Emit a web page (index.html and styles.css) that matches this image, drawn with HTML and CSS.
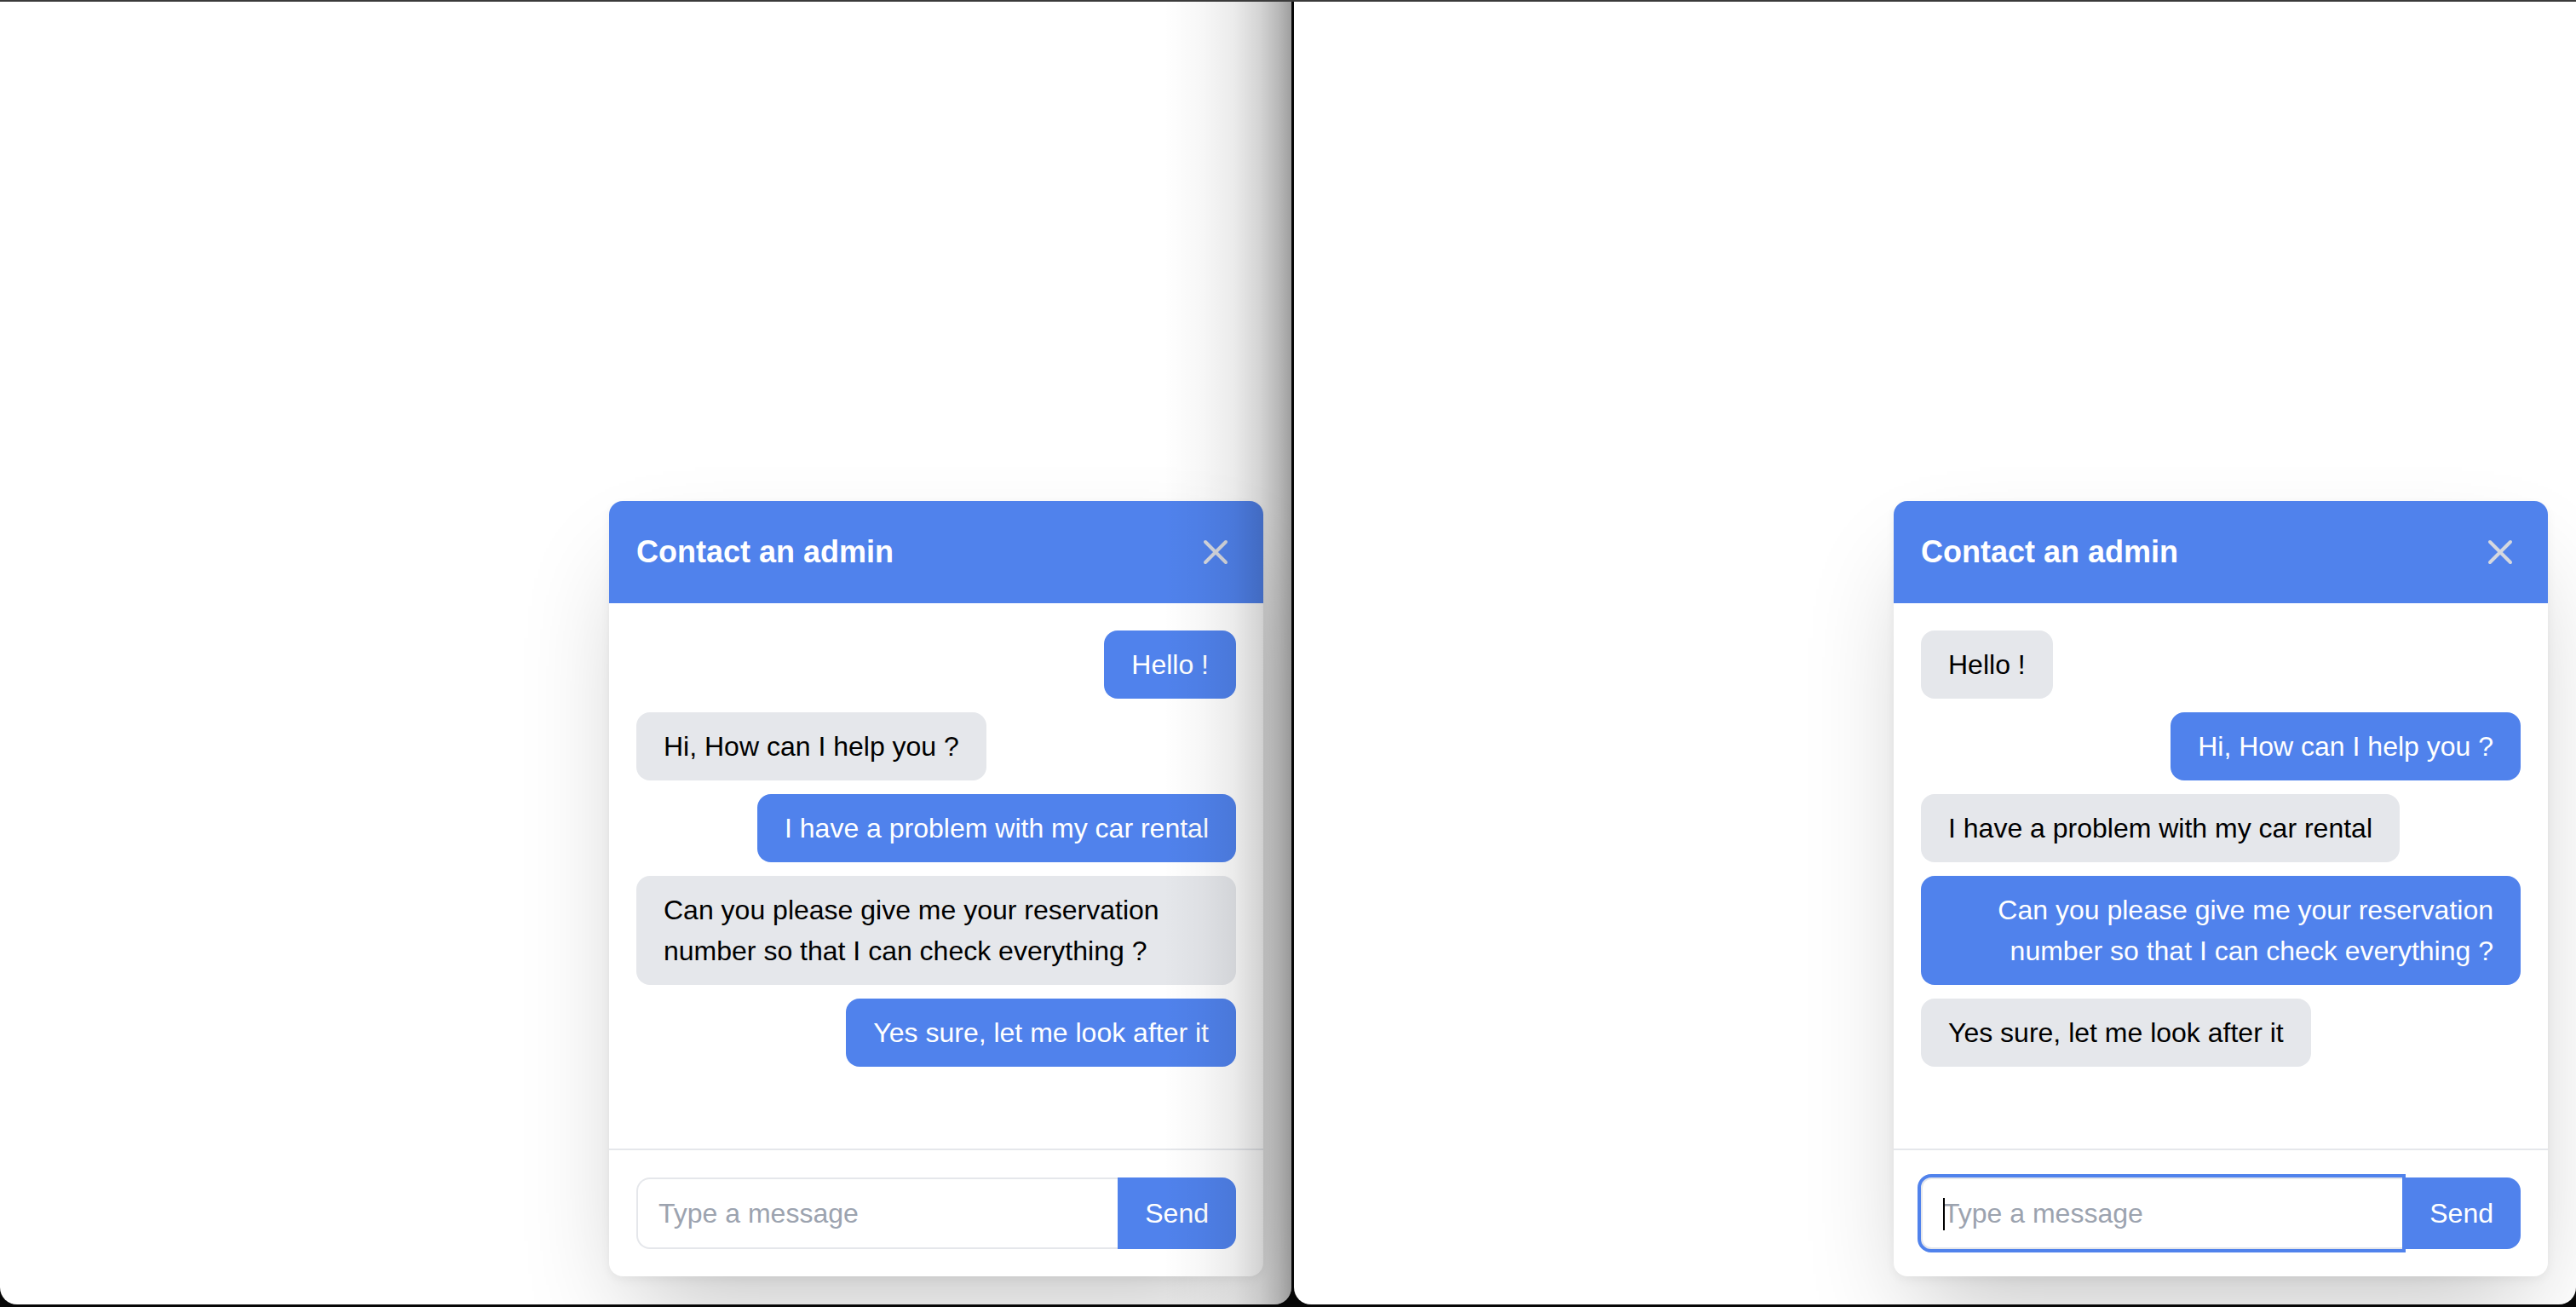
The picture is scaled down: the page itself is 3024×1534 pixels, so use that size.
FILE: index.html
```html
<!DOCTYPE html>
<html lang="en">
<head>
<meta charset="utf-8">
<title>Contact an admin</title>
<link rel="stylesheet" href="styles.css">
</head>
<body>
<div class="desktop">
  <div class="window window-left">
    <div class="chat">
      <div class="chat-header">
        <h2 class="chat-title">Contact an admin</h2>
        <button class="close-btn" type="button" aria-label="Close">
          <svg viewBox="0 0 24 24" width="48" height="48" fill="none" stroke="currentColor" stroke-width="2" stroke-linecap="round" stroke-linejoin="round"><path d="M6 18L18 6M6 6l12 12"/></svg>
        </button>
      </div>
      <div class="chat-messages">
        <div class="msg msg-right"><p class="bubble bubble-blue">Hello !</p></div>
        <div class="msg"><p class="bubble bubble-gray">Hi, How can I help you ?</p></div>
        <div class="msg msg-right"><p class="bubble bubble-blue">I have a problem with my car rental</p></div>
        <div class="msg"><p class="bubble bubble-gray">Can you please give me your reservation number so that I can check everything ?</p></div>
        <div class="msg msg-right"><p class="bubble bubble-blue">Yes sure, let me look after it</p></div>
      </div>
      <div class="chat-footer">
        <div class="input-wrap">
          <input class="chat-input" type="text" placeholder="Type a message">
        </div>
        <button class="send-btn" type="button">Send</button>
      </div>
    </div>
    <div class="edge-shade"></div>
  </div>
  <div class="window window-right">
    <div class="chat">
      <div class="chat-header">
        <h2 class="chat-title">Contact an admin</h2>
        <button class="close-btn" type="button" aria-label="Close">
          <svg viewBox="0 0 24 24" width="48" height="48" fill="none" stroke="currentColor" stroke-width="2" stroke-linecap="round" stroke-linejoin="round"><path d="M6 18L18 6M6 6l12 12"/></svg>
        </button>
      </div>
      <div class="chat-messages">
        <div class="msg"><p class="bubble bubble-gray">Hello !</p></div>
        <div class="msg msg-right"><p class="bubble bubble-blue">Hi, How can I help you ?</p></div>
        <div class="msg"><p class="bubble bubble-gray">I have a problem with my car rental</p></div>
        <div class="msg msg-right"><p class="bubble bubble-blue">Can you please give me your reservation number so that I can check everything ?</p></div>
        <div class="msg"><p class="bubble bubble-gray">Yes sure, let me look after it</p></div>
      </div>
      <div class="chat-footer">
        <div class="input-wrap">
          <input class="chat-input chat-input-focused" type="text" placeholder="Type a message">
          <span class="caret"></span>
        </div>
        <button class="send-btn" type="button">Send</button>
      </div>
    </div>
  </div>
</div>
</body>
</html>
```
FILE: styles.css
```css
* {
  box-sizing: border-box;
}

html, body {
  margin: 0;
  padding: 0;
  background: #0a0a0a;
}

body {
  font-family: "Liberation Sans", Arial, sans-serif;
  color: #000;
}

.desktop {
  width: 3024px;
  height: 1534px;
  border-top: 2px solid #3b3b3b;
  padding-bottom: 3px;
  display: flex;
  gap: 3px;
  background: #070707;
  overflow: hidden;
}

.window {
  position: relative;
  height: 100%;
  background: #ffffff;
  border-radius: 0 0 20px 20px;
  overflow: hidden;
  display: flex;
  align-items: flex-end;
  justify-content: flex-end;
  padding: 0 33px 33px 0;
}

.window-left {
  width: 1516px;
  flex: none;
}

.window-right {
  flex: 1;
  padding-right: 33px;
}

.edge-shade {
  position: absolute;
  top: 0;
  right: 0;
  bottom: 0;
  width: 150px;
  pointer-events: none;
  z-index: 5;
  background: linear-gradient(to right,
    rgba(0, 0, 0, 0) 0%,
    rgba(0, 0, 0, 0.03) 30%,
    rgba(0, 0, 0, 0.08) 55%,
    rgba(0, 0, 0, 0.17) 75%,
    rgba(0, 0, 0, 0.28) 90%,
    rgba(0, 0, 0, 0.38) 100%);
}

.chat {
  width: 768px;
  background: #ffffff;
  border-radius: 16px;
  box-shadow: 0 4px 12px rgba(0, 0, 0, 0.05), 0 60px 120px -30px rgba(0, 0, 0, 0.24);
  display: flex;
  flex-direction: column;
}

.chat-header {
  display: flex;
  align-items: center;
  justify-content: space-between;
  padding: 32px;
  background: #5082ec;
  border-radius: 16px 16px 0 0;
  color: #ffffff;
}

.chat-title {
  margin: 0;
  font-size: 36px;
  line-height: 56px;
  font-weight: 700;
}

.close-btn {
  display: flex;
  align-items: center;
  justify-content: center;
  width: 48px;
  height: 48px;
  padding: 0;
  border: none;
  background: transparent;
  color: #d5d8df;
}

.chat-messages {
  height: 640px;
  padding: 32px;
  overflow: hidden;
}

.msg {
  margin-bottom: 16px;
}

.msg-right {
  text-align: right;
}

.bubble {
  display: inline-block;
  margin: 0;
  padding: 16px 32px;
  border-radius: 16px;
  font-size: 32px;
  line-height: 48px;
}

.bubble-blue {
  background: #5082ec;
  color: #ffffff;
}

.bubble-gray {
  background: #e5e7eb;
  color: #000000;
}

.chat-footer {
  display: flex;
  padding: 32px;
  border-top: 2px solid #e5e7eb;
}

.input-wrap {
  position: relative;
  flex: 1;
  display: flex;
}

.chat-input {
  flex: 1;
  min-width: 0;
  padding: 16px 24px;
  font-family: "Liberation Sans", Arial, sans-serif;
  font-size: 32px;
  line-height: 48px;
  color: #000;
  border: 2px solid #e5e7eb;
  border-right: none;
  border-radius: 16px 0 0 16px;
  background: #ffffff;
  outline: none;
}

.chat-input::placeholder {
  color: #9ca3af;
}

.chat-input-focused {
  outline: 4px solid #5082ec;
  outline-offset: 0;
  border-radius: 12px 0 0 12px;
}

.caret {
  position: absolute;
  left: 26px;
  top: 24px;
  width: 2px;
  height: 38px;
  background: #000000;
}

.send-btn {
  flex: none;
  padding: 16px 32px;
  border: none;
  border-radius: 0 16px 16px 0;
  background: #5082ec;
  color: #ffffff;
  font-family: "Liberation Sans", Arial, sans-serif;
  font-size: 32px;
  line-height: 48px;
}
```
